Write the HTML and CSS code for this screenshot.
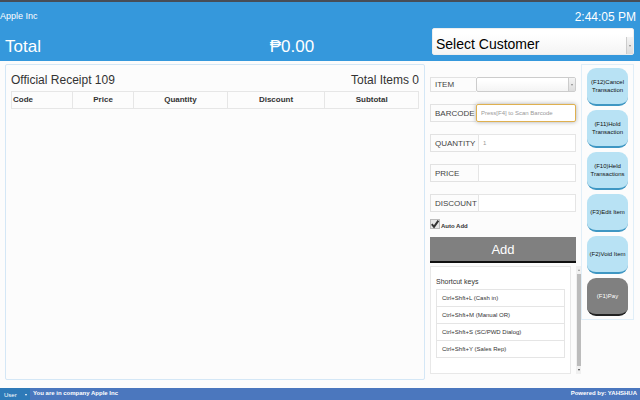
FILE: index.html
```html
<!DOCTYPE html>
<html lang="en">
<head>
<meta charset="utf-8">
<title>Apple Inc - Point of Sale</title>
<link rel="stylesheet" href="styles.css">
</head>
<body>
<header class="header">
  <div class="summary">
    <div class="company">Apple Inc</div>
    <div class="total"><span>Total</span><span class="amount">₱0.00</span></div>
  </div>
  <div class="session">
    <time class="clock">2:44:05 PM</time>
    <div class="picker picker-large">
      <select aria-label="Customer"><option>Select Customer</option></select>
      <span class="arrow"></span>
    </div>
  </div>
</header>
<main class="main">
  <section class="receipt">
    <div class="receipt-head"><h1>Official Receipt 109</h1><span>Total Items 0</span></div>
    <table class="lines">
      <colgroup><col class="c-code"><col class="c-price"><col class="c-quantity"><col class="c-discount"><col class="c-subtotal"></colgroup>
      <thead><tr><th>Code</th><th>Price</th><th>Quantity</th><th>Discount</th><th>Subtotal</th></tr></thead>
    </table>
  </section>
  <form class="entry">
    <div class="field field-item">
      <label for="item">ITEM</label>
      <div class="picker"><select id="item"><option></option></select><span class="arrow"></span></div>
    </div>
    <div class="field field-barcode"><label for="barcode">BARCODE</label><input id="barcode" type="text" placeholder="Press[F4] to Scan Barcode"></div>
    <div class="field"><label for="quantity">QUANTITY</label><input id="quantity" type="text" placeholder="1"></div>
    <div class="field"><label for="price">PRICE</label><input id="price" type="text"></div>
    <div class="field"><label for="discount">DISCOUNT</label><input id="discount" type="text"></div>
    <div class="auto">
      <span class="tick"><input id="auto" type="checkbox" checked><svg viewBox="0 0 10 10" aria-hidden="true"><path d="M1.8 5.2 4 7.8 8.4 1.6" fill="none" stroke="#333" stroke-width="2"/></svg></span>
      <label for="auto">Auto Add</label>
    </div>
    <button class="add" type="button">Add</button>
    <div class="scroller">
      <div class="shortcuts">
        <h2>Shortcut keys</h2>
        <ul>
          <li>Ctrl+Shft+L (Cash in)</li>
          <li>Ctrl+Shft+M (Manual OR)</li>
          <li>Ctrl+Shft+S (SC/PWD Dialog)</li>
          <li>Ctrl+Shft+Y (Sales Rep)</li>
        </ul>
      </div>
      <div class="scrollbar"><span class="up"></span><span class="thumb"></span><span class="down"></span></div>
    </div>
  </form>
  <nav class="actions">
    <button type="button">(F12)Cancel Transaction</button>
    <button type="button">(F11)Hold Transaction</button>
    <button type="button">(F10)Held Transactions</button>
    <button type="button">(F3)Edit Item</button>
    <button type="button">(F2)Void Item</button>
    <button type="button" class="pay">(F1)Pay</button>
  </nav>
</main>
<footer class="footer">
  <button type="button" class="user">User<span class="caret"></span></button>
  <span class="note">You are in company Apple Inc</span>
  <span class="note powered">Powered by: YAHSHUA</span>
</footer>
</body>
</html>
```
FILE: styles.css
```css
* { box-sizing: border-box; }

body {
  margin: 0;
  min-height: 100vh;
  display: flex;
  flex-direction: column;
  background: #fcfcfc;
  color: #333;
  font-family: "Liberation Sans", Arial, sans-serif;
  font-size: 6px;
}

button, input, select { font: inherit; color: inherit; margin: 0; }
h1, h2, ul { margin: 0; padding: 0; font-weight: normal; list-style: none; }

.header {
  display: flex;
  height: 61px;
  border-top: 2px solid #474d57;
  background: #3598dc;
  color: #fff;
}

.summary { flex: 1; }
.company { padding-top: 8px; font-size: 9px; line-height: 12px; }
.total {
  display: flex;
  margin-top: 14px;
  padding-left: 5px;
  font-size: 17px;
  line-height: 22px;
}
.total span { width: 62%; }
.total .amount { width: 38%; }

.session { width: 208px; padding-right: 6px; }
.clock {
  display: block;
  margin-right: -2px;
  padding-top: 8px;
  font-size: 12px;
  line-height: 14px;
  text-align: right;
}

.picker {
  display: flex;
  flex: 1;
  height: 15px;
  border: 1px solid #ccc;
  border-radius: 2px;
  background: linear-gradient(#fff 20%, #f4f4f4);
}
.picker select {
  flex: 1;
  min-width: 0;
  padding: 0 3px;
  border: 0;
  outline: 0;
  appearance: none;
  background: transparent;
}
.arrow {
  display: flex;
  align-items: center;
  justify-content: center;
  width: 7px;
  border-left: 1px solid #ccc;
  background: linear-gradient(#f4f4f4, #ddd);
}
.arrow::after {
  content: "";
  border: 1px solid transparent;
  border-top: 2px solid #888;
  border-bottom: 0;
}
.picker-large {
  height: 27px;
  margin-top: 4px;
  border-color: #eee;
  color: #000;
  font-size: 14px;
}
.picker-large select { padding-top: 5px; }
.picker-large .arrow { margin-top: 8px; }

.main {
  flex: 1;
  display: flex;
  align-items: flex-start;
  padding: 3px 6px 8px 5px;
}

.receipt {
  flex: 1;
  align-self: stretch;
  padding: 8px 5px;
  border: 1px solid #d4e7f6;
  border-radius: 2px;
}
.receipt-head {
  display: flex;
  justify-content: space-between;
  font-size: 12px;
  line-height: 14px;
}
.receipt-head h1 { font-size: 12px; }

.lines {
  width: 100%;
  margin-top: 4px;
  border-collapse: collapse;
  table-layout: fixed;
  font-size: 8px;
  line-height: 10px;
}
.lines th { padding: 3px 1px; border: 1px solid #e6e6e6; }
.lines th:first-child { text-align: left; }
.c-code { width: 15%; }
.c-price { width: 15%; }
.c-quantity { width: 23%; }
.c-discount { width: 24%; }
.c-subtotal { width: 23%; }

.entry { width: 151px; padding: 13px 0 0; margin-left: 5px; }
.field {
  display: flex;
  height: 18px;
  margin-bottom: 12px;
  padding-right: 5px;
}
.field label {
  display: flex;
  align-items: center;
  min-width: 48px;
  padding: 0 1px 0 4px;
  border: 1px solid #e2e2e2;
  border-right: 0;
  color: #444;
  font-size: 8px;
}
.field input {
  flex: 1;
  min-width: 0;
  padding: 0 4px;
  border: 1px solid #e5e5e5;
  outline: 0;
  background: #fff;
}
.field input::placeholder { color: #999; opacity: 1; }
.field-item { height: 15px; }
.field-item label, .field-barcode label { min-width: 46px; }
.field-barcode input {
  border-color: #dfb04f;
  border-radius: 2px;
  box-shadow: 0 0 4px #aaa;
}

.auto {
  display: flex;
  align-items: flex-end;
  height: 10px;
  margin-top: -5px;
  font-weight: bold;
  line-height: 6px;
}
.tick { display: grid; width: 10px; height: 10px; margin-right: 1px; }
.tick input, .tick svg { grid-area: 1 / 1; width: 10px; height: 10px; }
.tick input {
  appearance: none;
  border: 1px solid #bbb;
  background: #e6e6e6;
}
.tick svg { pointer-events: none; z-index: 1; }

.add {
  display: block;
  width: 146px;
  height: 26px;
  margin-top: 8px;
  padding: 0;
  border: 0;
  border-bottom: 2px solid #111;
  background: #808080;
  color: #fff;
  font-size: 13px;
}

.scroller {
  display: flex;
  justify-content: space-between;
  margin-top: 3px;
}
.shortcuts {
  width: 141px;
  padding: 10px 5px 15px;
  border: 1px solid #e8e8e8;
  background: #fff;
}
.shortcuts h2 { font-size: 7px; line-height: 9px; }
.shortcuts ul { margin-top: 3px; border: 1px solid #e5e5e5; }
.shortcuts li { padding: 4px 5px; line-height: 8px; }
.shortcuts li + li { border-top: 1px solid #e5e5e5; }

.scrollbar {
  display: flex;
  flex-direction: column;
  align-items: center;
  gap: 3px;
  width: 5px;
  padding: 3px 0;
  background: #f0f0f0;
}
.thumb { flex: 1; width: 4px; background: #bcbcbc; }
.up, .down { border: 1px solid transparent; }
.up { border-top: 0; border-bottom: 2px solid #999; }
.down { border-bottom: 0; border-top: 2px solid #444; }

.actions {
  display: grid;
  gap: 4px;
  width: 53px;
  padding: 3px 5px;
  border: 1px solid #e0eef8;
}
.actions button {
  height: 38px;
  padding: 0;
  border: 0;
  border-bottom: 2px solid #3f97c3;
  border-radius: 9px;
  background: #b8e2f4;
  color: #111;
  line-height: 8px;
}
.actions .pay { border-color: #222; background: #808080; color: #fff; }

.footer {
  display: flex;
  height: 12px;
  background: #4b77be;
  color: #fff;
}
.user {
  display: flex;
  align-items: center;
  justify-content: space-between;
  width: 30px;
  padding: 2px 3px 0 4px;
  border: 0;
  background: #2e7ab8;
}
.caret { border: 1px solid transparent; border-top: 2px solid #fff; border-bottom: 0; }
.note { padding-left: 3px; font-weight: bold; line-height: 10px; }
.powered { margin-left: auto; padding-right: 3px; }
```
